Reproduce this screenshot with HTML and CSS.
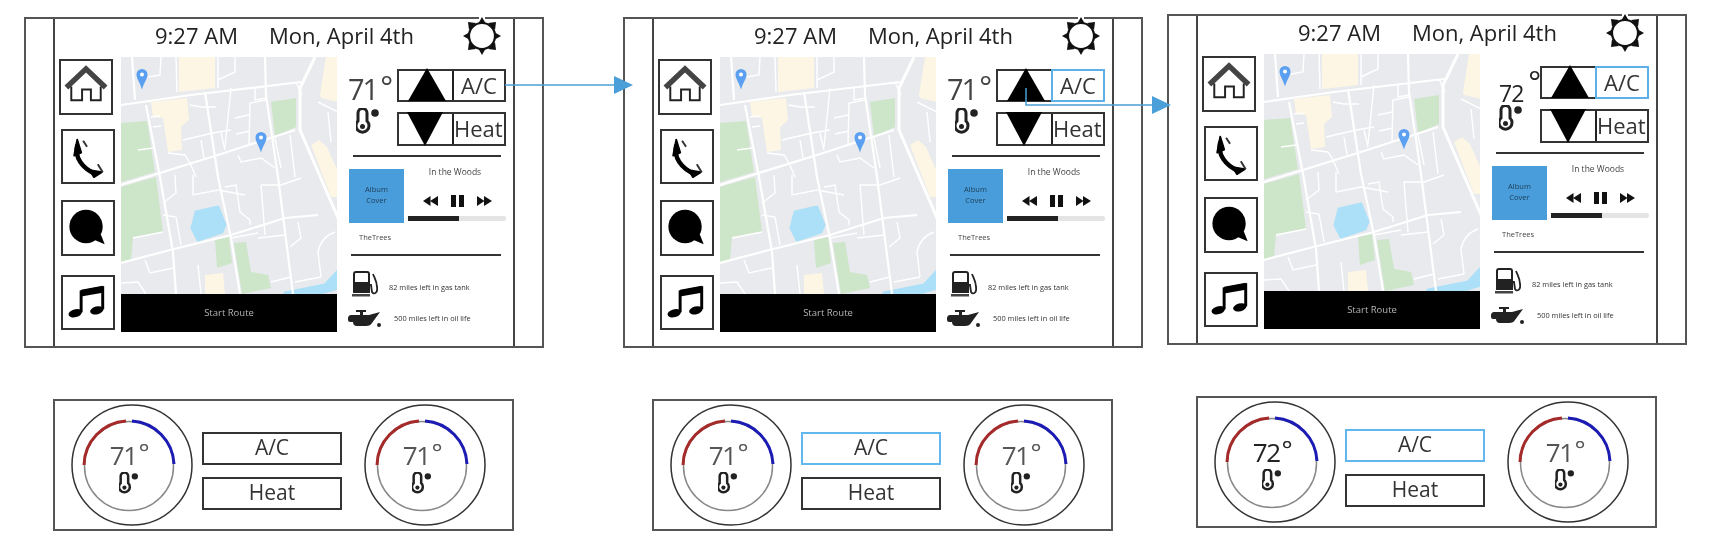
FILE: index.html

```html
<!DOCTYPE html>
<html lang="en">
<head>
    <meta charset="UTF-8">
    <title>Car dashboard wireframes</title>
    <link rel="stylesheet" href="styles.css">
</head>
<body>
    <svg class="defs" xmlns="http://www.w3.org/2000/svg">
        <symbol id="map" viewBox="0 0 216 237">
            <rect width="216" height="237" fill="#e8eaed"/>
            <g fill="#fdf6e4">
                <polygon points="58,0 94,0 94,31 58,35"/>
                <polygon points="30,45 66,41 68,63 60,70 61,93 47,95 42,61 32,60"/>
                <polygon points="205,0 217,0 217,45 200,41 199,38"/>
                <polygon points="190,88 198,83 206,90 217,115 217,140 210,140"/>
                <polygon points="84,218 102,216 104,237 84,237"/>
            </g>
            <g fill="#cde5c8">
                <polygon points="150,45 175,41 175,70 154,79"/>
                <polygon points="0,66 26,64 34,115 0,125"/>
                <polygon points="0,130 35,120 42,175 12,180 10,203 0,206"/>
                <polygon points="94,183 108,180 111,206 96,211"/>
                <polygon points="113,186 125,185 130,215 147,218 150,231 121,237"/>
            </g>
            <g fill="#ace0f8" stroke="#ace0f8" stroke-width="3" stroke-linejoin="round">
                <polygon points="75,155 97,150 104,168 101,175 77,183 71,171"/>
                <polygon points="164,236 204,228 217,214 217,231 197,237"/>
            </g>
            <g fill="none" stroke="#fff" stroke-width="2.2">
                <path d="M0 48L70 38L180 25"/>
                <path d="M144 0L145 38L157 120L172 237"/>
                <path d="M194 0L179 31L179 73L217 161" stroke-width="3"/>
                <path d="M11 0L14 43"/>
                <path d="M25 48L39 120L52 195L55 237"/>
                <path d="M0 128L97 98L174 73"/>
                <path d="M0 206L49 193L110 178L164 161L197 158"/>
                <path d="M84 35L97 120L110 181L119 237"/>
            </g>
            <g fill="none" stroke="#fff" stroke-width="1.4">
                <path d="M55 0L56 35M40 0L39 18L27 20M97 23L114 15L114 0M97 0L97 31"/>
                <path d="M110 31L104 90M134 30L134 43L145 41M145 43L129 46L128 88M114 61L128 58M115 77L129 74"/>
                <path d="M69 48L80 50L95 50M62 83L92 76L110 73M80 83L83 101M100 76L104 93"/>
                <path d="M47 96L64 98L69 106L75 120M117 98L120 105L140 101L154 111"/>
                <path d="M169 78L174 120M154 81L160 111M30 60L39 59M32 70L40 69M17 93L32 91"/>
                <path d="M197 45L217 55M207 55L210 85M175 25L181 38"/>
                <path d="M54 118L55 136L42 146M72 118L72 138L97 133L124 138M42 158L55 160L60 188"/>
                <path d="M104 130L115 128L119 155L129 163L129 168M140 128L144 178M137 181L164 178"/>
                <path d="M140 128L160 128L180 121M177 165L180 181L169 190M12 181L42 175"/>
                <path d="M24 203L29 216L52 211M0 226L17 225L25 237M77 208L80 237M174 225L200 220"/>
                <path d="M200 220L197 195Q200 180 214 175M150 225L170 220M110 181L137 176"/>
            </g>
            <path d="M21 12a5.5 5.5 0 0 1 5.5 5.5c0 4-3.5 8-5.5 15c-2-7-5.5-11-5.5-15a5.5 5.5 0 0 1 5.5-5.5z" fill="#5a9ff0"/>
            <circle cx="21" cy="17.5" r="2" fill="#fff"/>
            <path d="M140 75a5.5 5.5 0 0 1 5.5 5.5c0 4-3.5 8-5.5 15c-2-7-5.5-11-5.5-15a5.5 5.5 0 0 1 5.5-5.5z" fill="#5a9ff0"/>
            <circle cx="140" cy="80.5" r="2" fill="#fff"/>
        </symbol>
        <symbol id="sun" viewBox="0 0 40 40">
            <rect x="17" width="6" height="3" fill="#fff"/>
            <circle cx="20" cy="20" r="13" fill="#fff" stroke="#111" stroke-width="2.2"/>
            <g fill="#111">
                <polygon points="20,1 16,8 24,8"/>
                <polygon points="20,39 16,32 24,32"/>
                <polygon points="1,20 8,16 8,24"/>
                <polygon points="39,20 32,16 32,24"/>
                <polygon points="6,6 14,7 7,14"/>
                <polygon points="34,6 26,7 33,14"/>
                <polygon points="6,34 14,33 7,26"/>
                <polygon points="34,34 26,33 33,26"/>
            </g>
        </symbol>
        <symbol id="home" viewBox="0 0 50 52">
            <path d="M5 27L25 8L45 27" fill="none" stroke="#444" stroke-width="5.5"/>
            <path d="M10 26V40H21V29H30V40H40V26" fill="none" stroke="#222" stroke-width="2"/>
        </symbol>
        <symbol id="phone" viewBox="0 0 50 52">
            <path d="M14 14C11 27 19 38 33 44" fill="none" stroke="#000" stroke-width="4.5"/>
            <path d="M14 9L18 22L11 25z M39 42L27 40L31 47z" fill="#000" stroke="#000" stroke-width="2" stroke-linejoin="round"/>
            <path d="M20 10L24 16M35 34L40 42" fill="none" stroke="#333" stroke-width="2"/>
        </symbol>
        <symbol id="chat" viewBox="0 0 50 52">
            <circle cx="23" cy="25" r="17" fill="#000"/>
            <polygon points="30,38 38,33 42,43" fill="#000"/>
        </symbol>
        <symbol id="note" viewBox="0 0 50 52">
            <path d="M18 36V15L40 11V33" fill="none" stroke="#000" stroke-width="3"/>
            <path d="M18 13L40 9V16L18 20z" fill="#000"/>
            <ellipse cx="12" cy="37" rx="7" ry="4" fill="#000" transform="rotate(-15 12 37)"/>
            <ellipse cx="34" cy="34" rx="7" ry="4" fill="#000" transform="rotate(-15 34 34)"/>
        </symbol>
        <symbol id="thermo" viewBox="0 0 24 26">
            <path d="M2 5a4.5 4.5 0 0 1 9 0V13a6.5 6.5 0 1 1-9 0z" fill="#fff" stroke="#222" stroke-width="3"/>
            <circle cx="6.500" cy="18.500" r="2.5" fill="#222"/>
            <circle cx="19" cy="5" r="3.800" fill="#222"/>
        </symbol>
        <symbol id="gas" viewBox="0 0 26 26">
            <path d="M2 21V3a2 2 0 0 1 2-2H15a2 2 0 0 1 2 2V21z" fill="#fff" stroke="#222" stroke-width="2"/>
            <rect x="2" y="11" width="15" height="10" fill="#222"/>
            <rect y="23" width="18" height="2.5" fill="#444"/>
            <path d="M17 14H19L20 21C22 24 26 22 25 16C25 11 23 8 21 3" fill="none" stroke="#222" stroke-width="1.8"/>
        </symbol>
        <symbol id="oil" viewBox="0 0 33 17">
            <path d="M3 5H12V2H8V0H18V2H15V5H21L32 2L24 13C23 15 21 16 18 16H9C6 16 5 14 5 12H2C-1 12 -1 5 3 5z" fill="#222"/>
            <circle cx="31" cy="15" r="2" fill="#222"/>
        </symbol>
        <symbol id="up" viewBox="0 0 38 33">
            <polygon points="19,0 38,33 0,33" fill="#000"/>
        </symbol>
        <symbol id="down" viewBox="0 0 36 34">
            <polygon points="0,0 36,0 18,34" fill="#000"/>
        </symbol>
        <symbol id="rew" viewBox="0 0 15 10">
            <polygon points="0,5 7.5,0 7.5,10" fill="#111"/>
            <polygon points="7,5 15,0 15,10" fill="#111"/>
        </symbol>
        <symbol id="fwd" viewBox="0 0 15 10">
            <polygon points="0,0 7.5,5 0,10" fill="#111"/>
            <polygon points="7,0 15,5 7,10" fill="#111"/>
        </symbol>
        <symbol id="rings" viewBox="0 0 122 122">
            <circle cx="61" cy="61" r="60" fill="#fff" stroke="#333" stroke-width="1.5"/>
            <circle cx="58" cy="62" r="44.5" fill="none" stroke="#888" stroke-width="1.5"/>
            <path d="M13 61A45 45 0 0 1 55 17" fill="none" stroke="#a52a2a" stroke-width="3"/>
            <path d="M61 17A45 45 0 0 1 103 60" fill="none" stroke="#1c1cb4" stroke-width="3"/>
        </symbol>
    </svg>

    <div class="canvas">
        <!-- screen 1 -->
        <section class="screen screen-one">
            <div class="strip"></div>
            <div class="main">
                <header class="top">
                    <span class="time">9:27 AM</span>
                    <span class="date">Mon, April 4th</span>
                    <svg class="sun"><use href="#sun"/></svg>
                </header>
                <div class="body">
                    <nav class="nav">
                        <a class="tile tile-home"><svg><use href="#home"/></svg></a>
                        <a class="tile tile-phone"><svg><use href="#phone"/></svg></a>
                        <a class="tile tile-chat"><svg><use href="#chat"/></svg></a>
                        <a class="tile tile-note"><svg><use href="#note"/></svg></a>
                    </nav>
                    <div class="route">
                        <svg class="map"><use href="#map"/></svg>
                        <div class="start">Start Route</div>
                    </div>
                    <aside class="side">
                        <div class="climate">
                            <div class="temp">71<span class="deg">°</span></div>
                            <div class="btn">
                                <span class="dir"><svg class="tri-up"><use href="#up"/></svg></span>
                                <span class="label">A/C</span>
                            </div>
                            <svg class="thermo"><use href="#thermo"/></svg>
                            <div class="btn">
                                <span class="dir"><svg class="tri-down"><use href="#down"/></svg></span>
                                <span class="label label-heat">Heat</span>
                            </div>
                        </div>
                        <hr class="rule">
                        <div class="music">
                            <div class="album">Album<br>Cover</div>
                            <div class="player">
                                <div class="song">In the Woods</div>
                                <div class="controls">
                                    <svg class="skip"><use href="#rew"/></svg>
                                    <span class="pause"></span>
                                    <svg class="skip"><use href="#fwd"/></svg>
                                </div>
                                <div class="progress"><div class="progress-fill"></div></div>
                            </div>
                        </div>
                        <div class="artist">TheTrees</div>
                        <hr class="rule rule-low">
                        <div class="status status-gas"><svg class="gas"><use href="#gas"/></svg><span>82 miles left in gas tank</span></div>
                        <div class="status status-oil"><svg class="oil"><use href="#oil"/></svg><span>500 miles left in oil life</span></div>
                    </aside>
                </div>
            </div>
            <div class="strip strip-right"></div>
        </section>

        <!-- screen 2 -->
        <section class="screen screen-two">
            <div class="strip"></div>
            <div class="main">
                <header class="top">
                    <span class="time">9:27 AM</span>
                    <span class="date">Mon, April 4th</span>
                    <svg class="sun"><use href="#sun"/></svg>
                </header>
                <div class="body">
                    <nav class="nav">
                        <a class="tile tile-home"><svg><use href="#home"/></svg></a>
                        <a class="tile tile-phone"><svg><use href="#phone"/></svg></a>
                        <a class="tile tile-chat"><svg><use href="#chat"/></svg></a>
                        <a class="tile tile-note"><svg><use href="#note"/></svg></a>
                    </nav>
                    <div class="route">
                        <svg class="map"><use href="#map"/></svg>
                        <div class="start">Start Route</div>
                    </div>
                    <aside class="side">
                        <div class="climate">
                            <div class="temp">71<span class="deg">°</span></div>
                            <div class="btn">
                                <span class="dir"><svg class="tri-up"><use href="#up"/></svg></span>
                                <span class="label label-on">A/C</span>
                            </div>
                            <svg class="thermo"><use href="#thermo"/></svg>
                            <div class="btn">
                                <span class="dir"><svg class="tri-down"><use href="#down"/></svg></span>
                                <span class="label label-heat">Heat</span>
                            </div>
                        </div>
                        <hr class="rule">
                        <div class="music">
                            <div class="album">Album<br>Cover</div>
                            <div class="player">
                                <div class="song">In the Woods</div>
                                <div class="controls">
                                    <svg class="skip"><use href="#rew"/></svg>
                                    <span class="pause"></span>
                                    <svg class="skip"><use href="#fwd"/></svg>
                                </div>
                                <div class="progress"><div class="progress-fill"></div></div>
                            </div>
                        </div>
                        <div class="artist">TheTrees</div>
                        <hr class="rule rule-low">
                        <div class="status status-gas"><svg class="gas"><use href="#gas"/></svg><span>82 miles left in gas tank</span></div>
                        <div class="status status-oil"><svg class="oil"><use href="#oil"/></svg><span>500 miles left in oil life</span></div>
                    </aside>
                </div>
            </div>
            <div class="strip strip-right"></div>
        </section>

        <!-- screen 3 -->
        <section class="screen screen-three">
            <div class="strip"></div>
            <div class="main">
                <header class="top">
                    <span class="time">9:27 AM</span>
                    <span class="date">Mon, April 4th</span>
                    <svg class="sun"><use href="#sun"/></svg>
                </header>
                <div class="body">
                    <nav class="nav">
                        <a class="tile tile-home"><svg><use href="#home"/></svg></a>
                        <a class="tile tile-phone"><svg><use href="#phone"/></svg></a>
                        <a class="tile tile-chat"><svg><use href="#chat"/></svg></a>
                        <a class="tile tile-note"><svg><use href="#note"/></svg></a>
                    </nav>
                    <div class="route">
                        <svg class="map"><use href="#map"/></svg>
                        <div class="start">Start Route</div>
                    </div>
                    <aside class="side">
                        <div class="climate">
                            <div class="temp temp-new">72<span class="deg">°</span></div>
                            <div class="btn">
                                <span class="dir"><svg class="tri-up"><use href="#up"/></svg></span>
                                <span class="label label-on">A/C</span>
                            </div>
                            <svg class="thermo"><use href="#thermo"/></svg>
                            <div class="btn">
                                <span class="dir"><svg class="tri-down"><use href="#down"/></svg></span>
                                <span class="label label-heat">Heat</span>
                            </div>
                        </div>
                        <hr class="rule">
                        <div class="music">
                            <div class="album">Album<br>Cover</div>
                            <div class="player">
                                <div class="song">In the Woods</div>
                                <div class="controls">
                                    <svg class="skip"><use href="#rew"/></svg>
                                    <span class="pause"></span>
                                    <svg class="skip"><use href="#fwd"/></svg>
                                </div>
                                <div class="progress"><div class="progress-fill"></div></div>
                            </div>
                        </div>
                        <div class="artist">TheTrees</div>
                        <hr class="rule rule-low">
                        <div class="status status-gas"><svg class="gas"><use href="#gas"/></svg><span>82 miles left in gas tank</span></div>
                        <div class="status status-oil"><svg class="oil"><use href="#oil"/></svg><span>500 miles left in oil life</span></div>
                    </aside>
                </div>
            </div>
            <div class="strip strip-right"></div>
        </section>

        <!-- climate panels -->
        <section class="panel panel-one">
            <div class="dial"><svg class="rings"><use href="#rings"/></svg><div class="dial-temp">71<span class="deg">°</span></div><svg class="dial-thermo"><use href="#thermo"/></svg></div>
            <div class="modes"><div class="mode">A/C</div><div class="mode">Heat</div></div>
            <div class="dial"><svg class="rings"><use href="#rings"/></svg><div class="dial-temp">71<span class="deg">°</span></div><svg class="dial-thermo"><use href="#thermo"/></svg></div>
        </section>
        <section class="panel panel-two">
            <div class="dial"><svg class="rings"><use href="#rings"/></svg><div class="dial-temp">71<span class="deg">°</span></div><svg class="dial-thermo"><use href="#thermo"/></svg></div>
            <div class="modes"><div class="mode mode-on">A/C</div><div class="mode">Heat</div></div>
            <div class="dial"><svg class="rings"><use href="#rings"/></svg><div class="dial-temp">71<span class="deg">°</span></div><svg class="dial-thermo"><use href="#thermo"/></svg></div>
        </section>
        <section class="panel panel-three">
            <div class="dial"><svg class="rings"><use href="#rings"/></svg><div class="dial-temp dial-temp-new">72<span class="deg">°</span></div><svg class="dial-thermo"><use href="#thermo"/></svg></div>
            <div class="modes"><div class="mode mode-on">A/C</div><div class="mode">Heat</div></div>
            <div class="dial"><svg class="rings"><use href="#rings"/></svg><div class="dial-temp">71<span class="deg">°</span></div><svg class="dial-thermo"><use href="#thermo"/></svg></div>
        </section>

        <!-- arrows between the screens -->
        <svg class="arrows" width="1730" height="554">
            <path d="M505 85H616" fill="none" stroke="#4a9fd8" stroke-width="1.5"/>
            <polygon points="614,76 633,85 614,94" fill="#4a9fd8"/>
            <path d="M1026 88V105H1154" fill="none" stroke="#4a9fd8" stroke-width="1.5"/>
            <polygon points="1152,96 1171,105 1152,114" fill="#4a9fd8"/>
        </svg>
    </div>
</body>
</html>
```

FILE: styles.css

```css
* {
    box-sizing: border-box;
}
body {
    margin: 0;
    background-color: #fff;
    color: #222;
    font-family: "Open Sans", "Noto Sans", sans-serif;
}
.defs {
    display: none;
}
.canvas {
    position: relative;
    width: 1730px;
    height: 554px;
    overflow: hidden;
    filter: blur(0.5px);
}
.arrows {
    position: absolute;
    left: 0;
    top: 0;
}

/* screens sit on a free canvas */
.screen {
    position: absolute;
    display: flex;
    width: 520px;
    height: 331px;
    border: 2px solid #555;
}
.screen-one {
    left: 24px;
    top: 17px;
}
.screen-two {
    left: 623px;
    top: 17px;
}
.screen-three {
    left: 1167px;
    top: 14px;
}
.strip {
    flex: none;
    width: 29px;
    border-right: 2px solid #444;
}
.strip-right {
    border-right: none;
    border-left: 2px solid #444;
}
.main {
    flex: 1;
}
.top {
    display: flex;
    height: 38px;
    padding-left: 100px;
    font-size: 22px;
    line-height: 32px;
    color: #222;
}
.date {
    margin-left: 31px;
}
.sun {
    width: 40px;
    height: 40px;
    margin: -3px 11px 0 auto;
    overflow: visible;
}
.body {
    display: flex;
}

/* left icon column */
.nav {
    flex: none;
    display: flex;
    flex-direction: column;
    width: 66px;
    padding-top: 2px;
}
.tile {
    display: block;
    width: 54px;
    height: 55px;
    margin-left: 6px;
    border: 2px solid #333;
}
.tile svg {
    display: block;
    width: 50px;
    height: 51px;
}
.tile-home {
    height: 56px;
    margin-left: 4px;
}
.tile-phone {
    margin-top: 14px;
}
.tile-chat {
    margin-top: 16px;
    height: 56px;
}
.tile-note {
    margin-top: 19px;
}

/* map */
.route {
    flex: none;
    width: 216px;
}
.map {
    display: block;
    width: 216px;
    height: 237px;
    filter: blur(0.5px);
}
.start {
    height: 38px;
    background-color: #000;
    color: #b5b5b5;
    font-size: 9.5px;
    line-height: 38px;
    text-align: center;
}

/* right column */
.side {
    flex: none;
    width: 165px;
    margin-left: 11px;
    padding-top: 12px;
}
.climate {
    display: grid;
    grid-template-columns: 49px 109px;
    grid-template-rows: 33px 34px;
    row-gap: 10px;
}
.temp {
    font-size: 29px;
    line-height: 33px;
    letter-spacing: -2px;
    color: #444;
    margin-top: 3px;
    white-space: nowrap;
}
.deg {
    margin-left: 3px;
    font-size: 30px;
    line-height: 20px;
    vertical-align: 3px;
}
.temp-new {
    margin: 5px 0 0 8px;
    font-size: 23px;
    letter-spacing: -1px;
    color: #222;
}
.temp-new .deg {
    margin-left: 5px;
    vertical-align: 10px;
}
.thermo {
    width: 24px;
    height: 26px;
    margin: -4px 0 0 8px;
}
.btn {
    display: flex;
    border: 2px solid #333;
}
.dir {
    flex: none;
    display: flex;
    align-items: flex-start;
    width: 53px;
}
.tri-up {
    width: 38px;
    height: 33px;
    margin: -3px 0 0 9px;
    overflow: visible;
}
.tri-down {
    width: 36px;
    height: 34px;
    margin: -2px 0 0 8px;
    overflow: visible;
}
.label {
    flex: 1;
    border-left: 2px solid #222;
    color: #333;
    font-size: 22px;
    line-height: 29px;
    text-align: center;
    white-space: nowrap;
}
.label-heat {
    padding-right: 4px;
}
.label-on {
    margin: -2px -2px -2px 0;
    border: 2px solid #5db1e8;
}
.rule {
    width: 148px;
    height: 2px;
    margin: 9px 0 0 5px;
    border: none;
    background-color: #333;
}
.rule-low {
    width: 150px;
    margin: 12px 0 0 3px;
}
.music {
    display: flex;
    gap: 4px;
    margin: 12px 0 0 1px;
}
.album {
    flex: none;
    width: 55px;
    height: 54px;
    padding-top: 15px;
    background-color: #4a9ddb;
    color: #1c3d55;
    font-size: 7.5px;
    line-height: 11px;
    text-align: center;
}
.player {
    width: 98px;
    height: 54px;
    text-align: center;
}
.song {
    margin: -2px 0 0 -4px;
    font-size: 8.5px;
    line-height: 10px;
    color: #444;
}
.controls {
    display: flex;
    align-items: center;
    justify-content: center;
    gap: 13px;
    height: 14px;
    margin-top: 17px;
}
.skip {
    width: 15px;
    height: 10px;
}
.pause {
    width: 13px;
    height: 12px;
    border-left: 5px solid #111;
    border-right: 5px solid #111;
}
.progress {
    height: 5px;
    margin-top: 8px;
    border-radius: 2px;
    background-color: #e4e4e4;
}
.progress-fill {
    width: 52%;
    height: 100%;
    background-color: #222;
}
.artist {
    margin: 9px 0 0 11px;
    font-size: 7.5px;
    line-height: 10px;
    color: #444;
}
.status {
    display: flex;
    font-size: 7.4px;
    color: #333;
    white-space: nowrap;
}
.status-gas {
    gap: 11px;
    margin: 15px 0 0 4px;
    line-height: 32px;
}
.status-oil {
    gap: 13px;
    margin-top: 7px;
    line-height: 17px;
}
.gas {
    flex: none;
    width: 26px;
    height: 26px;
}
.oil {
    flex: none;
    width: 33px;
    height: 17px;
}

/* climate panels */
.panel {
    position: absolute;
    display: flex;
    align-items: center;
    width: 461px;
    height: 132px;
    padding-left: 16px;
    border: 2px solid #555;
}
.panel-one {
    left: 53px;
    top: 399px;
}
.panel-two {
    left: 652px;
    top: 399px;
}
.panel-three {
    left: 1196px;
    top: 396px;
}
.dial {
    position: relative;
    flex: none;
    display: flex;
    flex-direction: column;
    align-items: center;
    width: 122px;
    height: 122px;
    padding: 37px 6px 0 0;
}
.rings {
    position: absolute;
    left: 0;
    top: 0;
    width: 122px;
    height: 122px;
}
.dial-temp {
    position: relative;
    font-size: 26px;
    line-height: 28px;
    letter-spacing: -1.5px;
    color: #555;
    white-space: nowrap;
}
.dial-temp .deg {
    margin-left: 2px;
    font-size: 26px;
}
.dial-temp-new {
    color: #222;
}
.dial-thermo {
    position: relative;
    width: 20px;
    height: 22px;
    margin-top: 3px;
}
.modes {
    flex: none;
    display: flex;
    flex-direction: column;
    gap: 12px;
    width: 140px;
    margin: 12px 22px 0 9px;
}
.mode {
    height: 33px;
    border: 2px solid #333;
    color: #333;
    font-size: 21px;
    line-height: 27px;
    text-align: center;
}
.mode-on {
    border-color: #62b8ee;
}
```
